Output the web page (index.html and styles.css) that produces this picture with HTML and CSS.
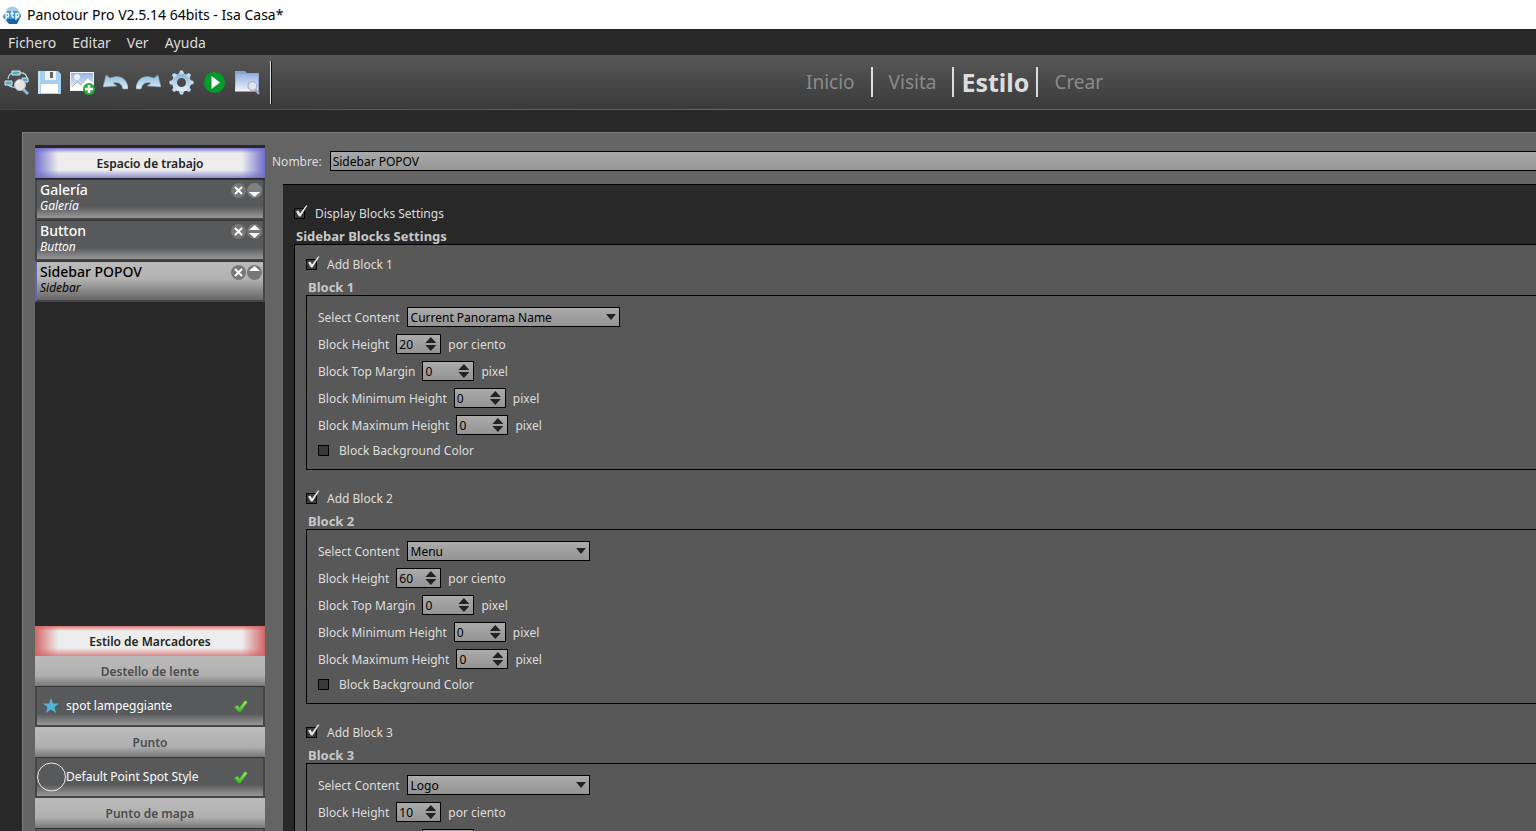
FILE: index.html
```html
<!DOCTYPE html>
<html lang="es">
<head>
<meta charset="utf-8">
<title>Panotour Pro V2.5.14 64bits - Isa Casa*</title>
<link rel="stylesheet" href="styles.css">
</head>
<body>
<svg class="defs" aria-hidden="true">
  <defs>
    <linearGradient id="ice" x1="0" y1="0" x2="0" y2="1"><stop offset="0" stop-color="#8fbbdc"/><stop offset="1" stop-color="#dcecf6"/></linearGradient>
    <linearGradient id="sky" x1="0" y1="0" x2="0" y2="1"><stop offset="0" stop-color="#96b2e4"/><stop offset="1" stop-color="#eef2fa"/></linearGradient>
    <linearGradient id="leaf" x1="0" y1="0" x2="0" y2="1"><stop offset="0" stop-color="#a4f070"/><stop offset="1" stop-color="#36b81c"/></linearGradient>
    <symbol id="mark" viewBox="0 0 15 15"><path d="M2 6.500 4.500 5.500 6 8.500 12 .5 13.500 .5 6.500 11.500H5Z" fill="#e8e8e8"/></symbol>
    <symbol id="tick" viewBox="0 0 14 13"><path d="M.5 7 3.500 5 5.500 7.500 11 .5 13.500 2 6.500 12 4.500 12Z" fill="url(#leaf)" stroke="#3c9a28" stroke-width=".5"/></symbol>
    <symbol id="close" viewBox="0 0 15 15"><circle cx="7.500" cy="7.500" r="7.500" fill="#777"/><path d="M4 4 11 11M11 4 4 11" stroke="#fff" stroke-width="2"/></symbol>
    <symbol id="down" viewBox="0 0 15 15"><circle cx="7.500" cy="7.500" r="7.500" fill="#808080"/><path d="M2 9H13L7.500 14Z" fill="#fff"/></symbol>
    <symbol id="up" viewBox="0 0 15 15"><circle cx="7.500" cy="7.500" r="7.500" fill="#777"/><path d="M2 6H13L7.500 1Z" fill="#fff"/></symbol>
    <symbol id="both" viewBox="0 0 15 15"><circle cx="7.500" cy="7.500" r="7.500" fill="#777"/><path d="M2 6H13L7.500 1ZM2 9H13L7.500 14Z" fill="#fff"/></symbol>
  </defs>
</svg>

<header class="titlebar">
  <svg class="logo" viewBox="0 0 20 20"><path d="M6 7 15 6 19 11 15 19 7 19 1 12Z" fill="#1767a8"/><path d="M1 11 5 6 16 6 19 10 17 14H3Z" fill="#4197d3"/><path d="M4 5Q8 0 13 2Q17 4 16 6H5Z" fill="#a8cde6"/><path d="M4 15V8.500H6Q7.500 10 6 12H4M10 6V11Q10 12.500 12 12M8.500 8.500H12M14 15V8.500H16Q17.500 10 16 12H14" fill="none" stroke="#fff" stroke-width="1.300"/></svg>
  <span>Panotour Pro V2.5.14 64bits - Isa Casa*</span>
</header>
<nav class="menubar" aria-label="Menú">
  <button>Fichero</button><button>Editar</button><button>Ver</button><button>Ayuda</button>
</nav>

<div class="toolbar">
  <div class="tools">
    <button aria-label="Explorar visita"><svg viewBox="0 0 25 25"><path d="M4 9Q5 3 9 3M15 3Q22 2 23 8M4 15Q8 18 12 17" fill="none" stroke="#c6dfe4" stroke-width="1.200"/><g fill="#4fa9c4" stroke="#d5ecf1"><path d="M8 1H16V5H8ZM1 11H8V15H1ZM18 8H24V12H18Z"/></g><path d="M19 19 24 24" stroke="#8fb9d6" stroke-width="3"/><circle cx="16" cy="15" r="5.500" fill="#e4e4e6" stroke="#bebfc2"/><path d="M12 14Q13 11 16 11" stroke="#fff" fill="none"/></svg></button>
    <button aria-label="Guardar"><svg viewBox="0 0 25 25"><path d="M1 1H21L24 4V24H1Z" fill="#a8cfee"/><path d="M1 1H3V24H1Z" fill="#c8e2f5"/><path d="M8 1H19V10H8Z" fill="#f1f1f1"/><path d="M13 2H16V8H13Z" fill="#666"/><path d="M4 14H21V23H4Z" fill="#fff"/></svg></button>
    <button aria-label="Añadir imagen"><svg viewBox="0 0 25 25"><path d="M0 2H24V21H0Z" fill="#f4f4f6"/><path d="M1 3H23V19H1Z" fill="url(#sky)"/><circle cx="7" cy="7" r="3" fill="#e5efff"/><path d="M1 20V17L7 12 11 15 17 8 23 13V20Z" fill="#fff"/><path d="M2 17 7 12 11 15 17 8" fill="none" stroke="#8695ae" stroke-width=".7"/><circle cx="19" cy="19" r="6" fill="#29ab37"/><path d="M19 15V23M15 19H23" stroke="#fff" stroke-width="2.500"/></svg></button>
    <button aria-label="Deshacer"><svg viewBox="0 0 25 25"><path d="M0 17 3 5 7 8Q21 3 25 16V19H20Q18 11 10 13L14 16Z" fill="url(#ice)" stroke="#7898b0" stroke-width=".6"/></svg></button>
    <button aria-label="Rehacer"><svg viewBox="0 0 25 25"><path d="M25 17 22 5 18 8Q4 3 0 16V19H5Q7 11 15 13L11 16Z" fill="url(#ice)" stroke="#7898b0" stroke-width=".6"/></svg></button>
    <button aria-label="Preferencias"><svg viewBox="0 0 25 25"><circle cx="12.500" cy="12.500" r="7" fill="none" stroke="url(#ice)" stroke-width="5"/><g fill="#c4ddee"><path id="tooth" d="M10 4 11 .5H14L15 4Z"/><use href="#tooth" transform="rotate(45 12.500 12.500)"/><use href="#tooth" transform="rotate(90 12.500 12.500)"/><use href="#tooth" transform="rotate(135 12.500 12.500)"/><use href="#tooth" transform="rotate(180 12.500 12.500)"/><use href="#tooth" transform="rotate(225 12.500 12.500)"/><use href="#tooth" transform="rotate(270 12.500 12.500)"/><use href="#tooth" transform="rotate(315 12.500 12.500)"/></g></svg></button>
    <button aria-label="Generar"><svg viewBox="0 0 25 25"><circle cx="12.500" cy="12.500" r="10.500" fill="#049b2d"/><path d="M9.500 6 18 12.500 9.500 19Z" fill="#fff"/></svg></button>
    <button aria-label="Abrir carpeta"><svg viewBox="0 0 25 25"><path d="M0 1H10L12 3H24V22H0Z" fill="#86a2d4"/><path d="M1 4H23V21H0Z" fill="url(#sky)"/><path d="M20 19 24 24" stroke="#a6a8ad" stroke-width="2.500"/><circle cx="17.500" cy="16" r="4.500" fill="#dfe3ec" stroke="#9ca2b2"/></svg></button>
  </div>
  <nav class="tabs" aria-label="Secciones">
    <a href="#inicio">Inicio</a><a href="#visita">Visita</a><a href="#estilo" class="current" aria-current="page">Estilo</a><a href="#crear">Crear</a>
  </nav>
</div>

<main class="workspace">
  <aside class="sidebar">
    <h2 class="bar blue">Espacio de trabajo</h2>
    <ul class="widgets">
      <li class="widget"><div><strong>Galería</strong><em>Galería</em></div><button aria-label="Eliminar"><svg><use href="#close"/></svg></button><button aria-label="Bajar"><svg><use href="#down"/></svg></button></li>
      <li class="widget"><div><strong>Button</strong><em>Button</em></div><button aria-label="Eliminar"><svg><use href="#close"/></svg></button><button aria-label="Mover"><svg><use href="#both"/></svg></button></li>
      <li class="widget selected"><div><strong>Sidebar POPOV</strong><em>Sidebar</em></div><button aria-label="Eliminar"><svg><use href="#close"/></svg></button><button aria-label="Subir"><svg><use href="#up"/></svg></button></li>
    </ul>
    <h2 class="bar red">Estilo de Marcadores</h2>
    <h3 class="category">Destello de lente</h3>
    <div class="spot"><svg class="shape" viewBox="0 0 29 30"><path d="M14 7 16 12.500H22L17.500 16 19 22 14 18.500 9 22 10.500 16 6 12.500H12Z" fill="#54b4d5"/></svg><span>spot lampeggiante</span><svg class="tick"><use href="#tick"/></svg></div>
    <h3 class="category">Punto</h3>
    <div class="spot"><svg class="shape" viewBox="0 0 29 30"><circle cx="14.500" cy="15" r="14" fill="none" stroke="#eee"/></svg><span>Default Point Spot Style</span><svg class="tick"><use href="#tick"/></svg></div>
    <h3 class="category">Punto de mapa</h3>
    <div class="spot"></div>
  </aside>

  <section class="editor">
    <div class="name"><label for="name">Nombre:</label><input id="name" type="text" value="Sidebar POPOV"></div>
    <div class="panel">
      <label class="check"><input type="checkbox" checked><svg><use href="#mark"/></svg>Display Blocks Settings</label>
      <h2 class="legend">Sidebar Blocks Settings</h2>
      <div class="group">
        <label class="check"><input type="checkbox" checked><svg><use href="#mark"/></svg>Add Block 1</label>
        <h3 class="legend">Block 1</h3>
        <div class="group block">
          <div class="field"><label for="c1">Select Content</label><div class="combo wide"><select id="c1"><option>Current Panorama Name</option><option>Menu</option><option>Logo</option></select><i></i></div></div>
          <div class="field"><label for="h1">Block Height</label><div class="spin short"><input id="h1" type="number" value="20"><div><button aria-label="Más"></button><button aria-label="Menos"></button></div></div><span>por ciento</span></div>
          <div class="field"><label for="t1">Block Top Margin</label><div class="spin"><input id="t1" type="number" value="0"><div><button aria-label="Más"></button><button aria-label="Menos"></button></div></div><span>pixel</span></div>
          <div class="field"><label for="n1">Block Minimum Height</label><div class="spin"><input id="n1" type="number" value="0"><div><button aria-label="Más"></button><button aria-label="Menos"></button></div></div><span>pixel</span></div>
          <div class="field"><label for="x1">Block Maximum Height</label><div class="spin"><input id="x1" type="number" value="0"><div><button aria-label="Más"></button><button aria-label="Menos"></button></div></div><span>pixel</span></div>
          <label class="check"><input type="checkbox">Block Background Color</label>
        </div>

        <label class="check next"><input type="checkbox" checked><svg><use href="#mark"/></svg>Add Block 2</label>
        <h3 class="legend">Block 2</h3>
        <div class="group block">
          <div class="field"><label for="c2">Select Content</label><div class="combo"><select id="c2"><option>Menu</option><option>Logo</option></select><i></i></div></div>
          <div class="field"><label for="h2">Block Height</label><div class="spin short"><input id="h2" type="number" value="60"><div><button aria-label="Más"></button><button aria-label="Menos"></button></div></div><span>por ciento</span></div>
          <div class="field"><label for="t2">Block Top Margin</label><div class="spin"><input id="t2" type="number" value="0"><div><button aria-label="Más"></button><button aria-label="Menos"></button></div></div><span>pixel</span></div>
          <div class="field"><label for="n2">Block Minimum Height</label><div class="spin"><input id="n2" type="number" value="0"><div><button aria-label="Más"></button><button aria-label="Menos"></button></div></div><span>pixel</span></div>
          <div class="field"><label for="x2">Block Maximum Height</label><div class="spin"><input id="x2" type="number" value="0"><div><button aria-label="Más"></button><button aria-label="Menos"></button></div></div><span>pixel</span></div>
          <label class="check"><input type="checkbox">Block Background Color</label>
        </div>

        <label class="check next"><input type="checkbox" checked><svg><use href="#mark"/></svg>Add Block 3</label>
        <h3 class="legend">Block 3</h3>
        <div class="group block">
          <div class="field"><label for="c3">Select Content</label><div class="combo"><select id="c3"><option>Logo</option><option>Menu</option></select><i></i></div></div>
          <div class="field"><label for="h3">Block Height</label><div class="spin short"><input id="h3" type="number" value="10"><div><button aria-label="Más"></button><button aria-label="Menos"></button></div></div><span>por ciento</span></div>
          <div class="field"><label for="t3">Block Top Margin</label><div class="spin"><input id="t3" type="number" value="0"><div><button aria-label="Más"></button><button aria-label="Menos"></button></div></div><span>pixel</span></div>
        </div>
      </div>
    </div>
  </section>
</main>
</body>
</html>
```
FILE: styles.css
```css
* { box-sizing: border-box; }
body {
  margin: 0;
  height: 100vh;
  display: flex;
  flex-direction: column;
  overflow: hidden;
  background: #282828;
  color: #dedede;
  font: 12px/16px "Noto Sans", "DejaVu Sans", sans-serif;
}
h2, h3, ul { margin: 0; padding: 0; }
button { border: 0; padding: 0; background: none; color: inherit; font: inherit; }
svg { display: block; }
.defs { position: absolute; width: 0; height: 0; }

.titlebar {
  flex: none;
  height: 29px;
  display: flex;
  align-items: center;
  gap: 5px;
  padding-left: 2px;
  background: #fff;
  color: #000;
  font-size: 14px;
}
.logo { width: 20px; height: 20px; }
.menubar {
  flex: none;
  height: 26px;
  display: flex;
  align-items: center;
  gap: 16px;
  padding: 2px 0 0 8px;
  font-size: 14px;
}
.toolbar {
  flex: none;
  height: 55px;
  display: flex;
  align-items: center;
  background: linear-gradient(#575757, #3a3a3a);
  border-bottom: 1px solid;
  border-image: linear-gradient(90deg, #3c4650, #3b74b4 50%, #3b74b4) 1;
}
.tools {
  display: flex;
  align-items: center;
  gap: 8px;
  height: 43px;
  padding: 0 10px 0 4px;
  border-right: 1px solid #ddd;
  box-shadow: 1px 0 #111;
}
.tools svg { width: 25px; height: 25px; }
.tabs {
  display: flex;
  align-items: center;
  margin-left: 519px;
  font-size: 19px;
  line-height: 30px;
}
.tabs a { padding: 0 16px; color: #8a8a8a; text-decoration: none; }
.tabs a + a { border-left: 2px solid #ddd; }
.tabs .current { padding: 0 7px; color: #ddd; font-size: 25px; font-weight: 700; }

.workspace {
  flex: 1;
  min-height: 0;
  display: flex;
  overflow: hidden;
  margin: 22px 0 0 22px;
  padding: 12px 0 0 12px;
  background: #646464;
  border: solid #7c7c7c;
  border-width: 1px 0 0 1px;
}
.sidebar {
  flex: none;
  width: 230px;
  display: flex;
  flex-direction: column;
  padding-top: 3px;
  background: #282828;
}
.bar, .category {
  flex: none;
  text-align: center;
  font-size: 12px;
  line-height: 30px;
  font-weight: 600;
  height: 30px;
  padding-top: 1px;
}
.bar { color: #222; }
.blue {
  background: linear-gradient(90deg, #716fcb, #ededed00 10%, #ededed00 90%, #716fcb), linear-gradient(#7775cf, #ededed 5px, #ededed 22px, #8c8ad3);
}
.red {
  background: linear-gradient(90deg, #d36565, #ededed00 10%, #ededed00 90%, #d36565), linear-gradient(#dc7777, #ededed 5px, #ededed 22px, #d88);
}
.widgets { flex: none; height: 448px; padding-top: 1px; list-style: none; }
.widget, .spot {
  display: flex;
  height: 41px;
  border: 2px solid #464646;
  border-top: 1px solid #333;
  background: linear-gradient(#57595b, #57595b 70%, #929292 97%);
}
.widget { padding: 2px 1px 0 3px; gap: 1px; color: #fff; }
.widget div { flex: 1; }
.widget strong, .widget em { display: block; }
.widget strong { font-size: 14px; font-weight: 500; }
.widget em { font-size: 12px; }
.widget button { width: 15px; height: 15px; margin-top: 1px; }
.widget svg { width: 15px; height: 15px; }
.widget.selected {
  color: #000;
  border-left-color: #6664b8;
  background: linear-gradient(#bbb, #b2b2b2 45%, #666);
}
.category {
  color: #4c4c4c;
  background: linear-gradient(#bbb, #b0b0b0 65%, #777);
}
.spot { flex: none; align-items: center; color: #fff; padding-right: 15px; }
.spot span { flex: 1; }
.shape { width: 29px; height: 30px; }
.tick { width: 14px; height: 13px; }

.editor { flex: 1; min-width: 0; padding: 6px 0 0 7px; }
.name { display: flex; align-items: center; gap: 8px; }
.name label { padding-top: 2px; }
.name input {
  flex: 1;
  height: 20px;
  padding: 0 2px;
  border: 1px solid #000;
  border-right: 0;
  background: linear-gradient(#a9a9a9, #969696);
  color: #000;
  font: inherit;
}
.panel {
  margin: 13px 0 0 11px;
  padding: 20px 0 0 11px;
  background: #282828;
  border-top: 1px solid #000;
}
.check { display: flex; gap: 6px; height: 16px; line-height: 18px; position: relative; }
.check input {
  appearance: none;
  width: 11px;
  height: 11px;
  margin: 3px 4px 0 0;
  border: 1px solid #000;
  background: #3a3a3a;
}
.check svg { position: absolute; left: 0; top: 0; width: 15px; height: 15px; }
.next { margin-top: 20px; }
.legend {
  height: 16px;
  margin: 7px 0 0 2px;
  font-size: 13px;
  line-height: 17px;
  font-weight: 700;
  color: #c8c8c8;
}
.group { padding: 11px 0 11px 11px; border: 1px solid #000; border-right: 0; background: #585858; }
.block { display: flex; flex-direction: column; gap: 7px; }
.field { display: flex; align-items: center; gap: 7px; height: 20px; }
.field label, .field span { padding-top: 2px; }
.combo, .spin {
  position: relative;
  display: flex;
  height: 20px;
  border: 1px solid #000;
  background: linear-gradient(#ababab, #949494);
}
.combo { width: 183px; }
.combo.wide { width: 213px; }
.combo select {
  appearance: none;
  width: 100%;
  padding: 1px 3px 0;
  border: 0;
  background: none;
  color: #000;
  font: inherit;
}
.combo i {
  position: absolute;
  right: 3px;
  top: 6px;
  border: solid transparent;
  border-width: 6px 5px 0;
  border-top-color: #222;
  pointer-events: none;
}
.spin { width: 52px; justify-content: space-between; }
.spin.short { width: 45px; }
.spin input {
  appearance: textfield;
  width: 28px;
  padding: 1px 2px 0;
  border: 0;
  background: none;
  color: #000;
  font: inherit;
}
.spin input::-webkit-inner-spin-button { appearance: none; margin: 0; }
.spin div { display: flex; flex-direction: column; justify-content: center; gap: 2px; padding-right: 4px; }
.spin button { width: 11px; height: 6px; background: #222; clip-path: polygon(50% 0, 100% 100%, 0 100%); }
.spin button + button { clip-path: polygon(0 0, 100% 0, 50% 100%); }
```
